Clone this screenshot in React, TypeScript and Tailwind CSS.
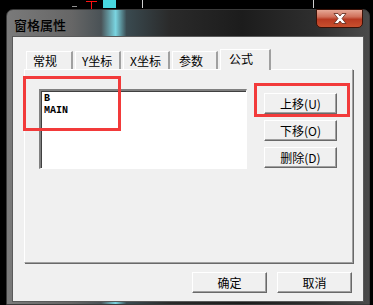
const cjk = "font-['SimSun','Noto_Sans_CJK_SC',sans-serif]"

function Tab({ label, active, w }: { label: string; active?: boolean; w: string }) {
  if (active) {
    return (
      <div
        className={`${w} h-[21px] -mb-px relative z-10 bg-[#f0f0f0] border-t border-l border-white border-r-2 border-r-[#a0a0a0] flex items-start pl-[8px] pt-[1px] text-[12px] leading-[16px] text-black ${cjk}`}
      >
        {label}
      </div>
    )
  }
  return (
    <div
      className={`${w} h-[18px] border-t border-l border-white border-r-2 border-r-[#a0a0a0] flex items-center pl-[6px] text-[12px] leading-[16px] text-black ${cjk}`}
    >
      {label}
    </div>
  )
}

function Btn({ label, w = 'w-[73px]' }: { label: string; w?: string }) {
  return (
    <div
      className={`${w} h-[21px] bg-[#f0f0f0] border border-t-white border-l-white border-r-[#696969] border-b-[#696969] shadow-[inset_-1px_-1px_0_#a0a0a0] flex items-center justify-center text-[12px] leading-none text-black ${cjk}`}
    >
      {label}
    </div>
  )
}

export default function App() {
  return (
    <div className="w-[373px] h-[305px] bg-black relative overflow-hidden flex flex-col">
      <svg width="373" height="9" className="block shrink-0">
        <rect x="72" y="6" width="5" height="1" fill="#909090" />
        <rect x="86" y="1" width="11" height="1" fill="#ff1010" />
        <rect x="91" y="1" width="1" height="8" fill="#ff1010" />
        <rect x="103" y="0" width="13" height="8" fill="#48d8e0" />
        <rect x="142" y="0" width="1" height="8" fill="#d0d0d0" />
        <rect x="313" y="0" width="1" height="8" fill="#d0d0d0" />
      </svg>
      <div className="ml-[6px] w-[364px] h-[296px] rounded-t-[7px] border border-[#3a3a3a] bg-[linear-gradient(90deg,#7a7a7a_0%,#666_18%,#4a5256_26%,#7ad4e0_30%,#3a4a50_33%,#2a2a2a_45%,#1c1c1c_65%,#2e2e2e_85%,#4a4a4a_100%)] flex flex-col px-[5px] pb-[2px]">
        <div className="h-[26px] flex items-start justify-between">
          <div className="mt-[7px] ml-[2px] text-[13px] leading-[16px] font-medium [color:#000] font-['Noto_Sans_CJK_SC',sans-serif]">窗格属性</div>
          <div className="w-[47px] h-[19px] -mt-px mr-[1px] rounded-b-[5px] border border-[#3a1208] bg-[linear-gradient(180deg,#e6a896_0%,#d0705a_40%,#b83a22_55%,#c8502e_100%)] flex items-center justify-center">
            <svg width="14" height="11" viewBox="0 0 14 11">
              <path d="M1 0.5h4l2 2.5 2-2.5h4l-4 5 4 5h-4l-2-2.5-2 2.5h-4l4-5z" fill="#fff" stroke="#5a2418" strokeWidth="0.8" />
            </svg>
          </div>
        </div>
        <div className="flex-1 bg-[#f0f0f0] border border-[#5a5a5a] flex flex-col pl-[11px] pr-[10px] pt-[12px]">
          <div className="flex items-end pl-[2px] gap-[2px] h-[20px]">
            <Tab label="常规" w="w-[47px]" />
            <Tab label="Y坐标" w="w-[46px]" />
            <Tab label="X坐标" w="w-[47px]" />
            <Tab label="参数" w="w-[46px]" />
            <Tab label="公式" w="w-[51px]" active />
          </div>
          <div className="h-[194px] border-t border-l border-white border-r border-b border-r-[#a0a0a0] border-b-[#a0a0a0] shadow-[1px_1px_0_#696969] flex pl-[14px] pt-[19px] gap-[17px]">
            <div className="w-[208px] h-[80px] bg-white border-t-2 border-l-2 border-t-[#808080] border-l-[#808080] border-r border-b border-r-white border-b-white shadow-[inset_1px_1px_0_#404040] pl-[3px] pt-[2px] font-['Liberation_Mono',monospace] text-[10px] font-bold leading-[12px] text-black">
              <div>B</div>
              <div>MAIN</div>
            </div>
            <div className="flex flex-col gap-[6px] pt-[4px]">
              <Btn label="上移(U)" />
              <Btn label="下移(O)" />
              <Btn label="删除(D)" />
            </div>
          </div>
          <div className="flex justify-end gap-[10px] pt-[9px] pr-[1px]">
            <Btn label="确定" w="w-[75px]" />
            <Btn label="取消" w="w-[75px]" />
          </div>
        </div>
      </div>
      <div className="absolute left-[23px] top-[76px] w-[98px] h-[55px] border-[3px] border-[#f23a3a]" />
      <div className="absolute left-[254px] top-[83px] w-[96px] h-[34px] border-[3px] border-[#f23a3a]" />
    </div>
  )
}
